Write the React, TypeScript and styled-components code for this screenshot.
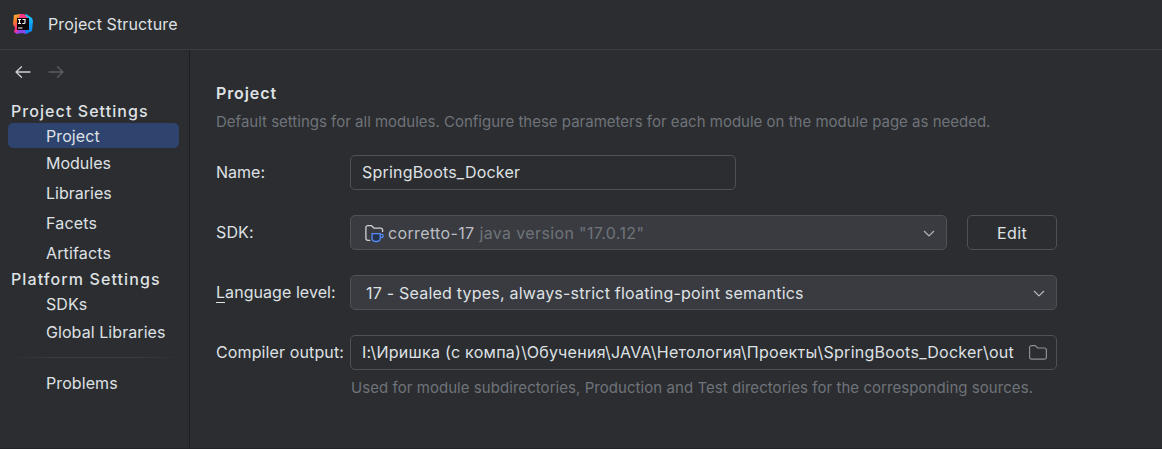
import React from "react";
import styled, { createGlobalStyle } from "styled-components";

const GlobalStyle = createGlobalStyle`
  * { box-sizing: border-box; }
  body {
    margin: 0;
    background: #2b2d30;
    color: #dfe1e5;
    font-family: Inter, "Noto Sans", sans-serif;
    font-size: 16px;
    line-height: 20px;
    overflow: hidden;
  }
`;

const Window = styled.div`
  display: flex;
  flex-direction: column;
  height: 449px;
  background: #2b2d30;
  border-bottom: 1px solid #232427;
  white-space: nowrap;
`;

const TitleBar = styled.header`
  display: flex;
  align-items: center;
  flex: none;
  height: 50px;
  padding: 0 0 1px 12px;
  gap: 14px;
  border-bottom: 1px solid #393b40;
`;

const Text = styled.span<{ $spacing?: number }>`
  letter-spacing: ${(p) => p.$spacing ?? 0}px;
`;

const Body = styled.div`
  display: flex;
  flex: 1;
  min-height: 0;
`;

const Sidebar = styled.nav`
  flex: none;
  width: 190px;
  padding-top: 14px;
  border-right: 1px solid #1e1f22;
`;

const History = styled.div`
  display: flex;
  align-items: center;
  height: 16px;
  padding-left: 15px;
  gap: 17px;
  margin-bottom: 20px;
`;

const GroupTitle = styled.div<{ $spacing: number }>`
  height: 22px;
  line-height: 22px;
  padding-left: 11px;
  font-weight: 500;
  letter-spacing: ${(p) => p.$spacing}px;
`;

const Item = styled.div<{ $height: number; $selected?: boolean; $spacing?: number }>`
  height: ${(p) => p.$height}px;
  line-height: ${(p) => (p.$selected ? p.$height + 2 : p.$height)}px;
  margin: ${(p) => (p.$selected ? "1px 10px 0 8px" : "0 10px 0 8px")};
  padding-left: 38px;
  border-radius: 5px;
  background: ${(p) => (p.$selected ? "#2e436e" : "transparent")};
  letter-spacing: ${(p) => p.$spacing ?? 0}px;
`;

const Separator = styled.div`
  height: 1px;
  margin: 11px 8px;
  background: linear-gradient(90deg, transparent, #393b40 25%, #393b40 75%, transparent);
`;

const Content = styled.main`
  flex: 1;
  padding: 33px 0 0 26px;
`;

const Heading = styled.h1`
  margin: 0;
  font-size: 16px;
  line-height: 20px;
  font-weight: 600;
  letter-spacing: 0.9px;
`;

const Hint = styled.p<{ $top?: number; $left?: number; $spacing?: number }>`
  margin: ${(p) => p.$top ?? 0}px 0 0 ${(p) => p.$left ?? 0}px;
  font-size: 15px;
  line-height: 20px;
  color: #6f737a;
  letter-spacing: ${(p) => p.$spacing ?? 0}px;
`;

const Form = styled.div`
  display: grid;
  grid-template-columns: 134px 707px;
  grid-auto-rows: 36px;
  row-gap: 24px;
  align-items: center;
  margin-top: 22px;
`;

const Controls = styled.div`
  display: flex;
  gap: 20px;
  align-self: end;
`;

const Field = styled.div<{ $width: number; $filled?: boolean; $inset?: number }>`
  display: flex;
  align-items: center;
  align-self: end;
  width: ${(p) => p.$width}px;
  height: 35px;
  padding: ${(p) => (p.$filled ? "1px" : "0")} 9px ${(p) => (p.$filled ? "0" : "1px")} ${(p) => p.$inset ?? 11}px;
  border: 1px solid #4e5157;
  border-radius: 5px;
  background: ${(p) => (p.$filled ? "#393b40" : "#2b2d30")};

  & > svg:last-child { margin-left: auto; }
`;

const Button = styled.button`
  width: 90px;
  height: 35px;
  padding: 1px 0 0;
  border: 1px solid #4e5157;
  border-radius: 5px;
  background: #2b2d30;
  color: #dfe1e5;
  font: inherit;
  letter-spacing: 0.4px;
`;

const SdkName = styled.span`
  margin: 0 5px 0 4px;
  color: #bcbec4;
  letter-spacing: 0.36px;
`;

const Muted = styled.span`
  color: #6f737a;
  letter-spacing: 0.36px;
`;

const Mnemonic = styled.span`
  border-bottom: 1px solid #dfe1e5;
`;

const Logo = () => (
  <svg width="22" height="22" viewBox="0 0 22 22">
    <defs>
      <linearGradient id="warm" x1="0" y1="0" x2="0.4" y2="1">
        <stop offset="0" stopColor="#fcbf3a" />
        <stop offset="0.4" stopColor="#f97a2c" />
        <stop offset="0.75" stopColor="#fb2d7b" />
        <stop offset="1" stopColor="#c13ae0" />
      </linearGradient>
      <linearGradient id="cool" x1="0" y1="0" x2="0" y2="1">
        <stop offset="0" stopColor="#18c8f2" />
        <stop offset="1" stopColor="#087cfa" />
      </linearGradient>
    </defs>
    <path d="M11 4 14 1l6 4 1 3-1 10-6 3-4-3z" fill="url(#cool)" />
    <path d="M2 2 8 1l3 3-1 13-5 4-3-2 1-4-2-4z" fill="url(#warm)" />
    <path d="M8 1h4l4 4H7z" fill="#f5377f" />
    <path d="M4 21l3-4h6l1 4-4-1z" fill="#8b45e8" />
    <path d="M5 5h12v12H5z" fill="#0b0508" />
    <path d="M6 6.5h3M7.5 6.5v4M6 10.5h3M10.500 6.500h2.500v3q0 1-1.200 1h-1.400M6 15h4.500" fill="none" stroke="#fff" strokeWidth="1.1" />
  </svg>
);

const Arrow = ({ forward = false }: { forward?: boolean }) => (
  <svg width="16" height="16" viewBox="0 0 16 16" fill="none" stroke={forward ? "#5a5d63" : "#ced0d6"} strokeWidth="1.3" strokeLinecap="round" strokeLinejoin="round">
    <path d={forward ? "M1 8h14M9.5 2.7 15 8l-5.5 5.3" : "M15 8H1M6.5 2.7 1 8l5.5 5.3"} />
  </svg>
);

const Chevron = () => (
  <svg width="16" height="16" viewBox="0 0 16 16" fill="none" stroke="#b4b8bf" strokeWidth="1.2" strokeLinecap="round" strokeLinejoin="round">
    <path d="m3.3 6.3 4.7 4.6 4.700-4.600" />
  </svg>
);

const JdkIcon = () => (
  <svg width="22" height="22" viewBox="0 0 22 22" fill="none" strokeWidth="1.3" strokeLinejoin="round">
    <path d="M8.300 18.300H5.900a2 2 0 0 1-2-2V5.700a2 2 0 0 1 2-2h3.700l2.500 2.500h6.500a2 2 0 0 1 2 2v1.900" stroke="#ced0d6" />
    <path d="M10 11.600h8.200v4.500a3.400 3.400 0 0 1-3.400 3.400h-1.400a3.400 3.400 0 0 1-3.400-3.400z" fill="#25324d" stroke="#548af7" />
    <path d="M18.200 12.300h1.600a1.400 1.400 0 0 1 1.400 1.400v.4a1.400 1.400 0 0 1-1.400 1.400h-1.600" stroke="#548af7" />
  </svg>
);

const FolderIcon = () => (
  <svg width="20" height="20" viewBox="0 0 20 20" fill="none" stroke="#8c8f95" strokeWidth="1.2" strokeLinejoin="round">
    <path d="M2.600 5.600a2 2 0 0 1 2-2h3.700l2.500 2.400h6.600a2 2 0 0 1 2 2v7.200a2 2 0 0 1-2 2H4.600a2 2 0 0 1-2-2z" />
  </svg>
);

export default function App() {
  return (
    <>
      <GlobalStyle />
      <Window>
        <TitleBar>
          <Logo />
          <Text $spacing={0.12}>Project Structure</Text>
        </TitleBar>
        <Body>
          <Sidebar>
            <History>
              <Arrow />
              <Arrow forward />
            </History>
            <GroupTitle $spacing={1.07}>Project Settings</GroupTitle>
            <Item $height={25} $selected $spacing={0.1}>Project</Item>
            <Item $height={30}>Modules</Item>
            <Item $height={30}>Libraries</Item>
            <Item $height={30} $spacing={0.2}>Facets</Item>
            <Item $height={30} $spacing={0.15}>Artifacts</Item>
            <GroupTitle $spacing={1.1}>Platform Settings</GroupTitle>
            <Item $height={28} $spacing={0.1}>SDKs</Item>
            <Item $height={28} $spacing={0.07}>Global Libraries</Item>
            <Separator />
            <Item $height={28} $spacing={0.08}>Problems</Item>
          </Sidebar>
          <Content>
            <Heading>Project</Heading>
            <Hint $top={9}>
              Default settings for all modules. Configure these parameters for each module on the module page as needed.
            </Hint>
            <Form>
              <Text>Name:</Text>
              <Field $width={386}><Text $spacing={0.2}>SpringBoots_Docker</Text></Field>
              <Text $spacing={0.15}>SDK:</Text>
              <Controls>
                <Field $width={597} $filled>
                  <JdkIcon />
                  <SdkName>corretto-17</SdkName>
                  <Muted>java version "17.0.12"</Muted>
                  <Chevron />
                </Field>
                <Button>Edit</Button>
              </Controls>
              <Text $spacing={0.06}><Mnemonic>L</Mnemonic>anguage level:</Text>
              <Field $width={707} $filled $inset={15}>
                <Text $spacing={0.22}>17 - Sealed types, always-strict floating-point semantics</Text>
                <Chevron />
              </Field>
              <Text $spacing={0.12}>Compiler output:</Text>
              <Field $width={707}>
                <Text $spacing={0.27}>I:\Иришка (с компа)\Обучения\JAVA\Нетология\Проекты\SpringBoots_Docker\out</Text>
                <FolderIcon />
              </Field>
            </Form>
            <Hint $top={8} $left={135} $spacing={0.054}>
              Used for module subdirectories, Production and Test directories for the corresponding sources.
            </Hint>
          </Content>
        </Body>
      </Window>
    </>
  );
}
